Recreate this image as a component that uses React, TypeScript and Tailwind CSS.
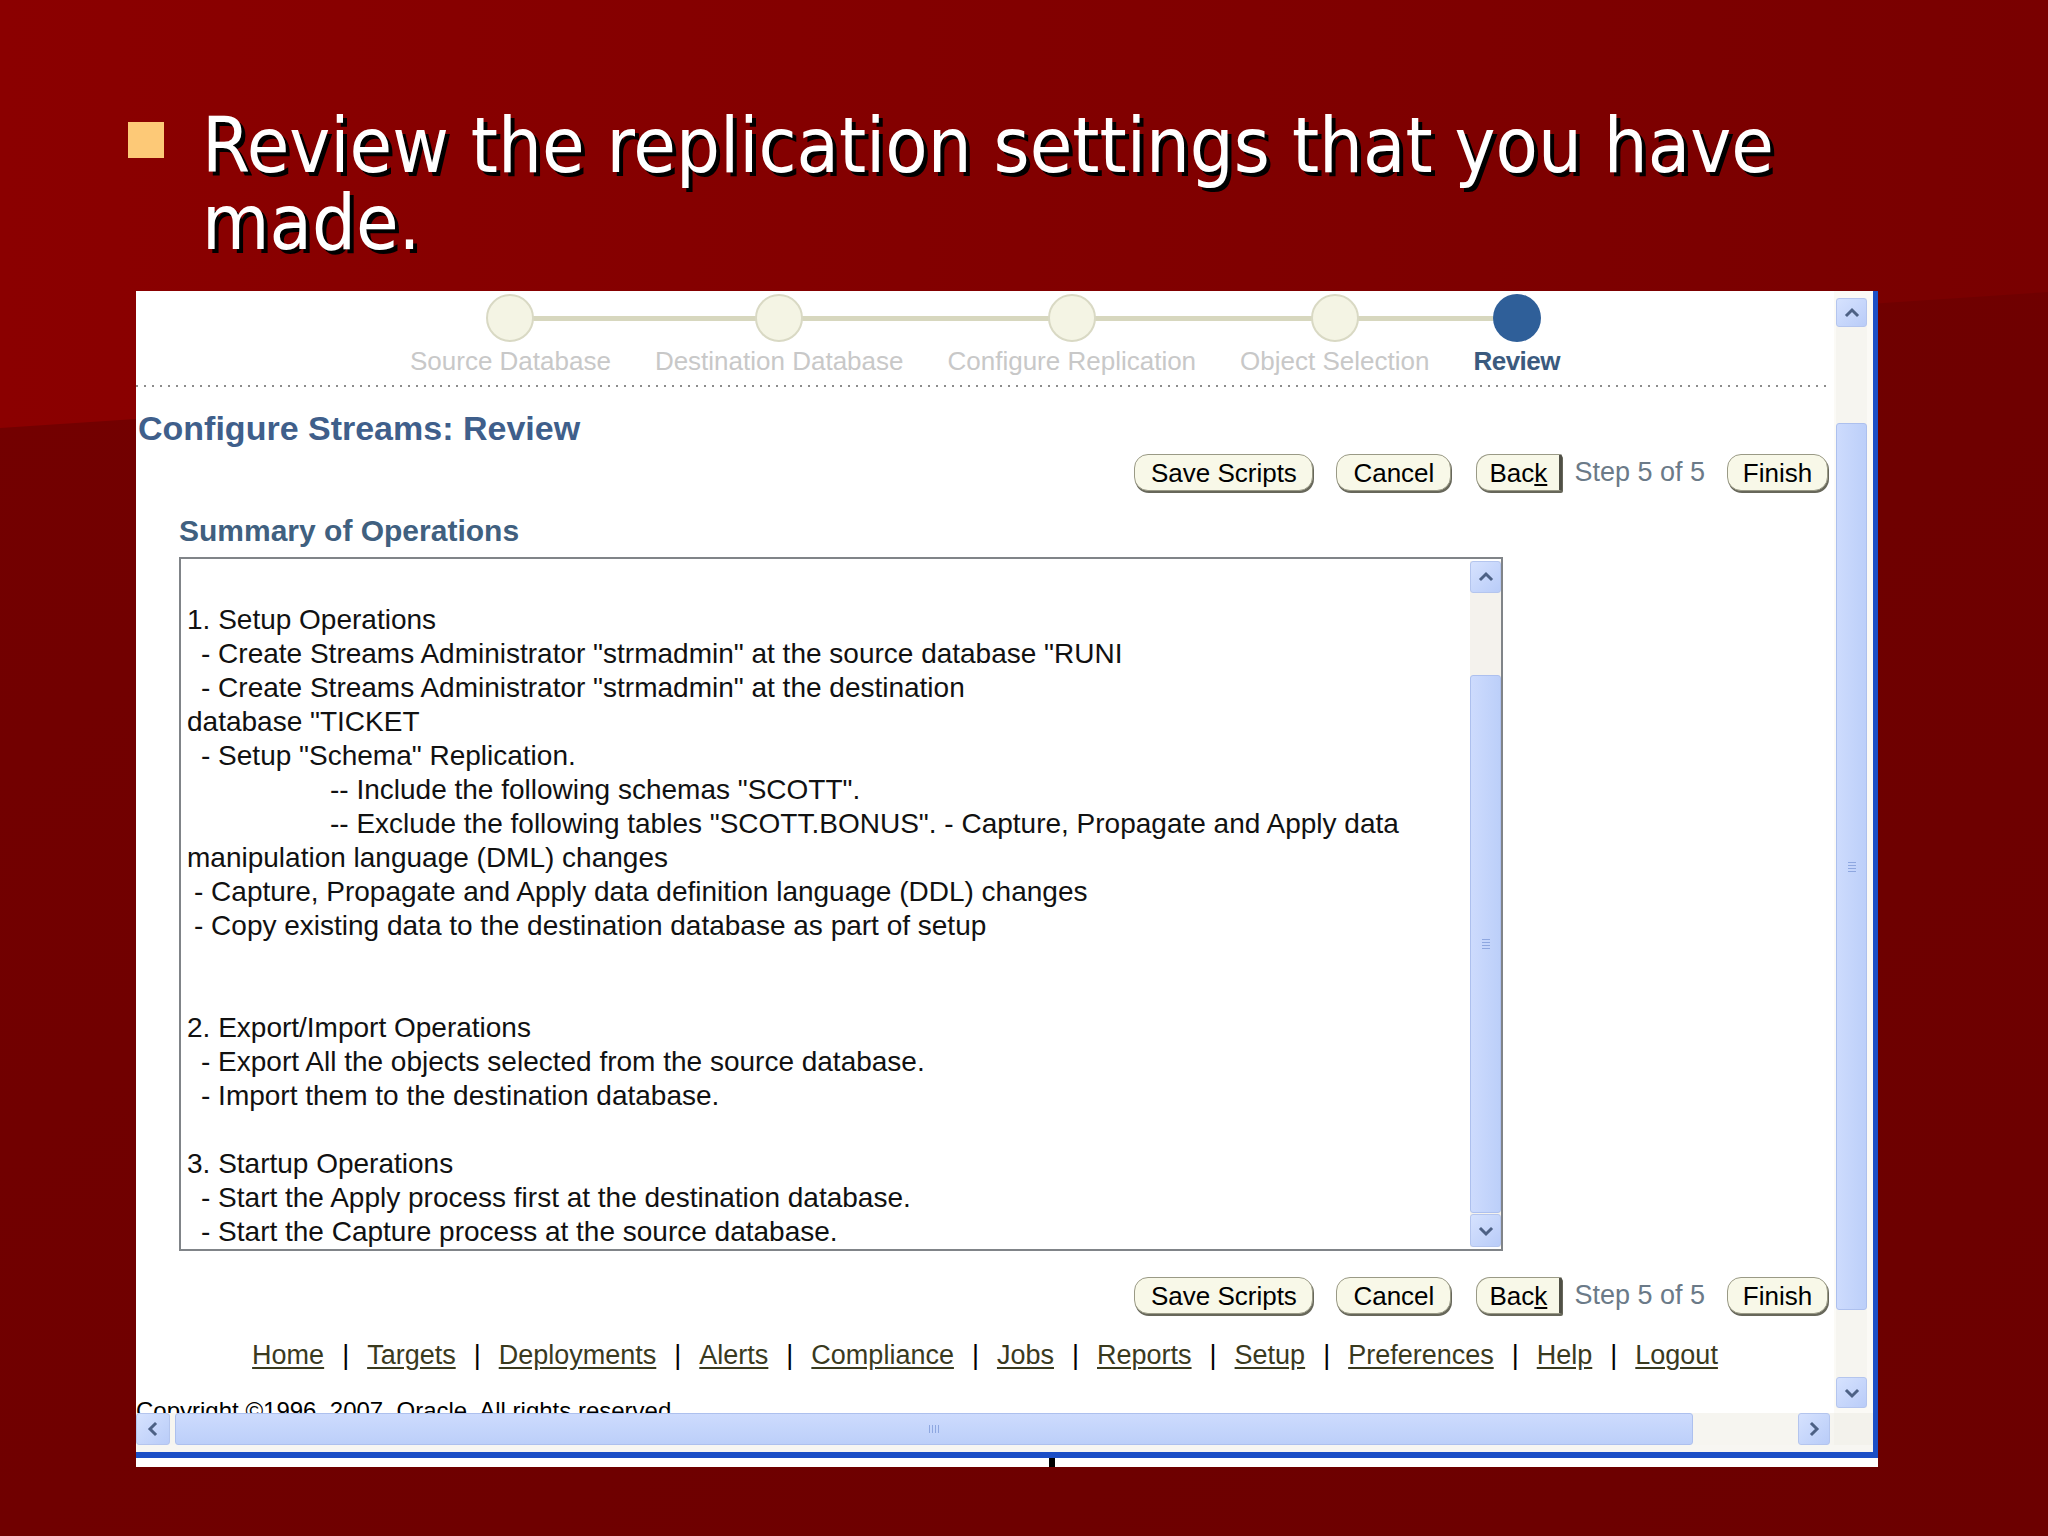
import React from 'react';

const ui = "font-['Liberation_Sans',Arial,sans-serif]";

const steps = [
  { label: 'Source Database', active: false },
  { label: 'Destination Database', active: false },
  { label: 'Configure Replication', active: false },
  { label: 'Object Selection', active: false },
  { label: 'Review', active: true },
];

const summary: { t: string; i: number }[] = [
  { t: '', i: 0 },
  { t: '1. Setup Operations', i: 0 },
  { t: '- Create Streams Administrator "strmadmin" at the source database "RUNI', i: 14 },
  { t: '- Create Streams Administrator "strmadmin" at the destination', i: 14 },
  { t: 'database "TICKET', i: 0 },
  { t: '- Setup "Schema" Replication.', i: 14 },
  { t: '-- Include the following schemas "SCOTT".', i: 143 },
  { t: '-- Exclude the following tables "SCOTT.BONUS". - Capture, Propagate and Apply data', i: 143 },
  { t: 'manipulation language (DML) changes', i: 0 },
  { t: '- Capture, Propagate and Apply data definition language (DDL) changes', i: 7 },
  { t: '- Copy existing data to the destination database as part of setup', i: 7 },
  { t: '', i: 0 },
  { t: '', i: 0 },
  { t: '2. Export/Import Operations', i: 0 },
  { t: '- Export All the objects selected from the source database.', i: 14 },
  { t: '- Import them to the destination database.', i: 14 },
  { t: '', i: 0 },
  { t: '3. Startup Operations', i: 0 },
  { t: '- Start the Apply process first at the destination database.', i: 14 },
  { t: '- Start the Capture process at the source database.', i: 14 },
];

const links = ['Home', 'Targets', 'Deployments', 'Alerts', 'Compliance', 'Jobs', 'Reports', 'Setup', 'Preferences', 'Help', 'Logout'];

const dots = Array.from({ length: 212 }, (_, k) => k);

function Chevron({ dir }: { dir: 'up' | 'down' | 'left' | 'right' }) {
  const pts = {
    up: '3,10 8,5 13,10',
    down: '3,6 8,11 13,6',
    left: '10,3 5,8 10,13',
    right: '6,3 11,8 6,13',
  }[dir];
  return (
    <svg width="16" height="16" viewBox="0 0 16 16">
      <polyline points={pts} fill="none" stroke="#4d6185" strokeWidth="3" strokeLinecap="square" />
    </svg>
  );
}

function ArrowBtn({ dir, className }: { dir: 'up' | 'down' | 'left' | 'right'; className: string }) {
  return (
    <div className={`flex items-center justify-center rounded-[3px] border border-[#b4c5ee] bg-gradient-to-br from-[#d6e2fe] to-[#b9ccf8] ${className}`}>
      <Chevron dir={dir} />
    </div>
  );
}

function Grip({ vertical }: { vertical: boolean }) {
  return (
    <div className={vertical ? 'flex flex-col gap-[2px]' : 'flex gap-[2px]'}>
      {[0, 1, 2, 3].map((k) => (
        <div key={k} className={vertical ? 'w-[8px] h-[1px] bg-[#8ea7e0]' : 'w-[1px] h-[8px] bg-[#8ea7e0]'} />
      ))}
    </div>
  );
}

function Btn({ children, w, back }: { children: React.ReactNode; w: string; back?: boolean }) {
  return (
    <div
      className={`${w} h-[37px] flex items-center justify-center bg-[#f8f8e8] border border-[#9a9a86] shadow-[1px_2px_0_#67675a] text-[26px] leading-none text-black ${
        back ? 'rounded-l-[14px] rounded-r-[2px] border-r-[3px] border-r-[#505046]' : 'rounded-[14px]'
      }`}
    >
      {children}
    </div>
  );
}

function ButtonBar() {
  return (
    <div className="flex items-center justify-end pr-[6px] h-[37px]">
      <Btn w="w-[179px]">Save Scripts</Btn>
      <div className="w-[23px]" />
      <Btn w="w-[115px]">Cancel</Btn>
      <div className="w-[25px]" />
      <Btn w="w-[86px]" back>
        <span>
          Bac<span className="underline underline-offset-2">k</span>
        </span>
      </Btn>
      <span className="ml-[12px] mr-[22px] text-[27px] text-[#6b7a88]">Step 5 of 5</span>
      <Btn w="w-[101px]">Finish</Btn>
    </div>
  );
}

function Train() {
  return (
    <div className="flex justify-center pt-[3px]">
      {steps.map((s, idx) => (
        <div key={s.label} className="flex flex-col items-center">
          <div className="relative w-full h-[48px] flex justify-center">
            {idx > 0 && <div className="absolute left-0 right-1/2 top-[22px] h-[5px] bg-[#d7d7be]" />}
            {idx < steps.length - 1 && <div className="absolute left-1/2 right-0 top-[22px] h-[5px] bg-[#d7d7be]" />}
            <div
              className={`relative w-[48px] h-[48px] rounded-full ${
                s.active ? 'bg-[#2f5f99]' : 'bg-[#f4f4e4] border-2 border-[#d9d9c4]'
              }`}
            />
          </div>
          <div
            className={`mt-[4px] px-[22px] text-[26px] leading-[30px] whitespace-nowrap ${
              s.active ? 'font-bold text-[#3b5a7e] tracking-[-0.5px]' : 'text-[#c8c8c8]'
            }`}
          >
            {s.label}
          </div>
        </div>
      ))}
    </div>
  );
}

function SummaryBox() {
  return (
    <div className="ml-[43px] mt-[5px] w-[1324px] h-[697px] flex border-2 border-[#808488] bg-white">
      <div className="flex-1 overflow-hidden pt-[10px] pl-[6px] text-[28px] leading-[34px] text-[#111]">
        {summary.map((l, k) => (
          <div key={k} className="h-[34px] whitespace-pre" style={{ paddingLeft: l.i }}>
            {l.t}
          </div>
        ))}
      </div>
      <div className="w-[31px] my-[2px] flex flex-col bg-[#f4f2ed]">
        <ArrowBtn dir="up" className="h-[32px]" />
        <div className="h-[82px]" />
        <div className="h-[538px] flex items-center justify-center rounded-[3px] border border-[#adc0ee] bg-gradient-to-r from-[#cddbfd] to-[#bccff9]">
          <Grip vertical />
        </div>
        <div className="flex-1" />
        <ArrowBtn dir="down" className="h-[33px]" />
      </div>
    </div>
  );
}

function PageView() {
  return (
    <div className={`w-[1698px] h-[1122px] overflow-hidden flex flex-col bg-white ${ui}`}>
      <Train />
      <div className="mt-[9px] h-[2px] flex gap-[6px]">
        {dots.map((k) => (
          <div key={k} className="w-[2px] h-[2px] bg-[#8c8c8c]" />
        ))}
      </div>
      <div className="mt-[21px] pl-[2px] text-[34px] leading-[40px] font-bold text-[#3f5f8b]">Configure Streams: Review</div>
      <div className="mt-[1px] h-[2px] bg-[#d9d7c8]" />
      <div className="mt-[5px]">
        <ButtonBar />
      </div>
      <div className="mt-[22px] pl-[43px] text-[30px] leading-[36px] font-bold text-[#40607f]">Summary of Operations</div>
      <div className="mt-[3px] ml-[43px] h-[2px] bg-[#d9d7c8]" />
      <SummaryBox />
      <div className="mt-[21px] h-[2px] bg-[#dcdacd]" />
      <div className="mt-[5px]">
        <ButtonBar />
      </div>
      <div className="mt-[25px] flex justify-center text-[27px] leading-[32px]">
        {links.map((l, k) => (
          <React.Fragment key={l}>
            {k > 0 && <span className="mx-[18px] text-black">|</span>}
            <span className="underline underline-offset-[3px] text-[#3a3a1e]">{l}</span>
          </React.Fragment>
        ))}
      </div>
      <div className="mt-[26px] text-[24px] leading-[28px] text-black whitespace-nowrap">Copyright ©1996, 2007, Oracle. All rights reserved.</div>
    </div>
  );
}

function PageScrollbar() {
  return (
    <div className="w-[39px] h-[1122px] pl-[2px] pr-[6px] pt-[7px] pb-[5px] flex flex-col bg-[#fbfaf6]">
      <div className="flex flex-col h-full bg-[#f6f5f0]">
        <ArrowBtn dir="up" className="h-[29px]" />
        <div className="h-[96px]" />
        <div className="h-[887px] flex items-center justify-center rounded-[3px] border border-[#adc0ee] bg-gradient-to-r from-[#cddbfd] to-[#bccff9]">
          <Grip vertical />
        </div>
        <div className="flex-1" />
        <ArrowBtn dir="down" className="h-[31px]" />
      </div>
    </div>
  );
}

function HScrollbar() {
  return (
    <div className="flex h-[32px]">
      <div className="w-[1698px] flex bg-[#f6f5f0]">
        <ArrowBtn dir="left" className="w-[34px]" />
        <div className="w-[5px]" />
        <div className="w-[1518px] flex items-center justify-center rounded-[3px] border border-[#adc0ee] bg-gradient-to-b from-[#cddbfd] to-[#bccff9]">
          <Grip vertical={false} />
        </div>
        <div className="flex-1" />
        <ArrowBtn dir="right" className="w-[32px]" />
        <div className="w-[4px]" />
      </div>
      <div className="flex-1 bg-[#f3f2ec]" />
    </div>
  );
}

export default function App() {
  return (
    <div className="relative w-[2048px] h-[1536px] overflow-hidden bg-[#700000]">
      <svg className="absolute inset-0" width="2048" height="1536" viewBox="0 0 2048 1536">
        <defs>
          <linearGradient id="top" x1="0" y1="0" x2="1" y2="0">
            <stop offset="0" stopColor="#8b0000" />
            <stop offset="1" stopColor="#790000" />
          </linearGradient>
          <linearGradient id="bot" x1="0" y1="0" x2="1" y2="1">
            <stop offset="0" stopColor="#740000" />
            <stop offset="1" stopColor="#6c0000" />
          </linearGradient>
        </defs>
        <rect x="0" y="0" width="2048" height="1536" fill="url(#bot)" />
        <polygon points="0,0 2048,0 2048,292 0,428" fill="url(#top)" />
      </svg>

      <div className="relative flex flex-col">
        <div className="flex items-start pl-[128px] pt-[107px]">
          <div className="mt-[15px] w-[36px] h-[36px] bg-[#fdc977]" />
          <div className="ml-[38px] text-white text-[77px] leading-[77px] [font-stretch:condensed] font-['DejaVu_Sans_Condensed','DejaVu_Sans',sans-serif] [text-shadow:4px_4px_0_#000]">
            <div className="whitespace-nowrap">Review the replication settings that you have</div>
            <div className="whitespace-nowrap">made.</div>
          </div>
        </div>

        <div className="mt-[30px] ml-[136px] w-[1742px] flex flex-col">
          <div className="flex">
            <div className="flex flex-col bg-white">
              <div className="flex">
                <PageView />
                <PageScrollbar />
              </div>
              <HScrollbar />
              <div className="h-[7px] bg-[#f7f6f2]" />
            </div>
            <div className="w-[5px] bg-[#1c4fc6]" />
          </div>
          <div className="h-[6px] bg-[#1c4fc6]" />
          <div className="h-[9px] bg-white flex">
            <div className="ml-[913px] w-[6px] h-full bg-black" />
          </div>
        </div>
      </div>
    </div>
  );
}
